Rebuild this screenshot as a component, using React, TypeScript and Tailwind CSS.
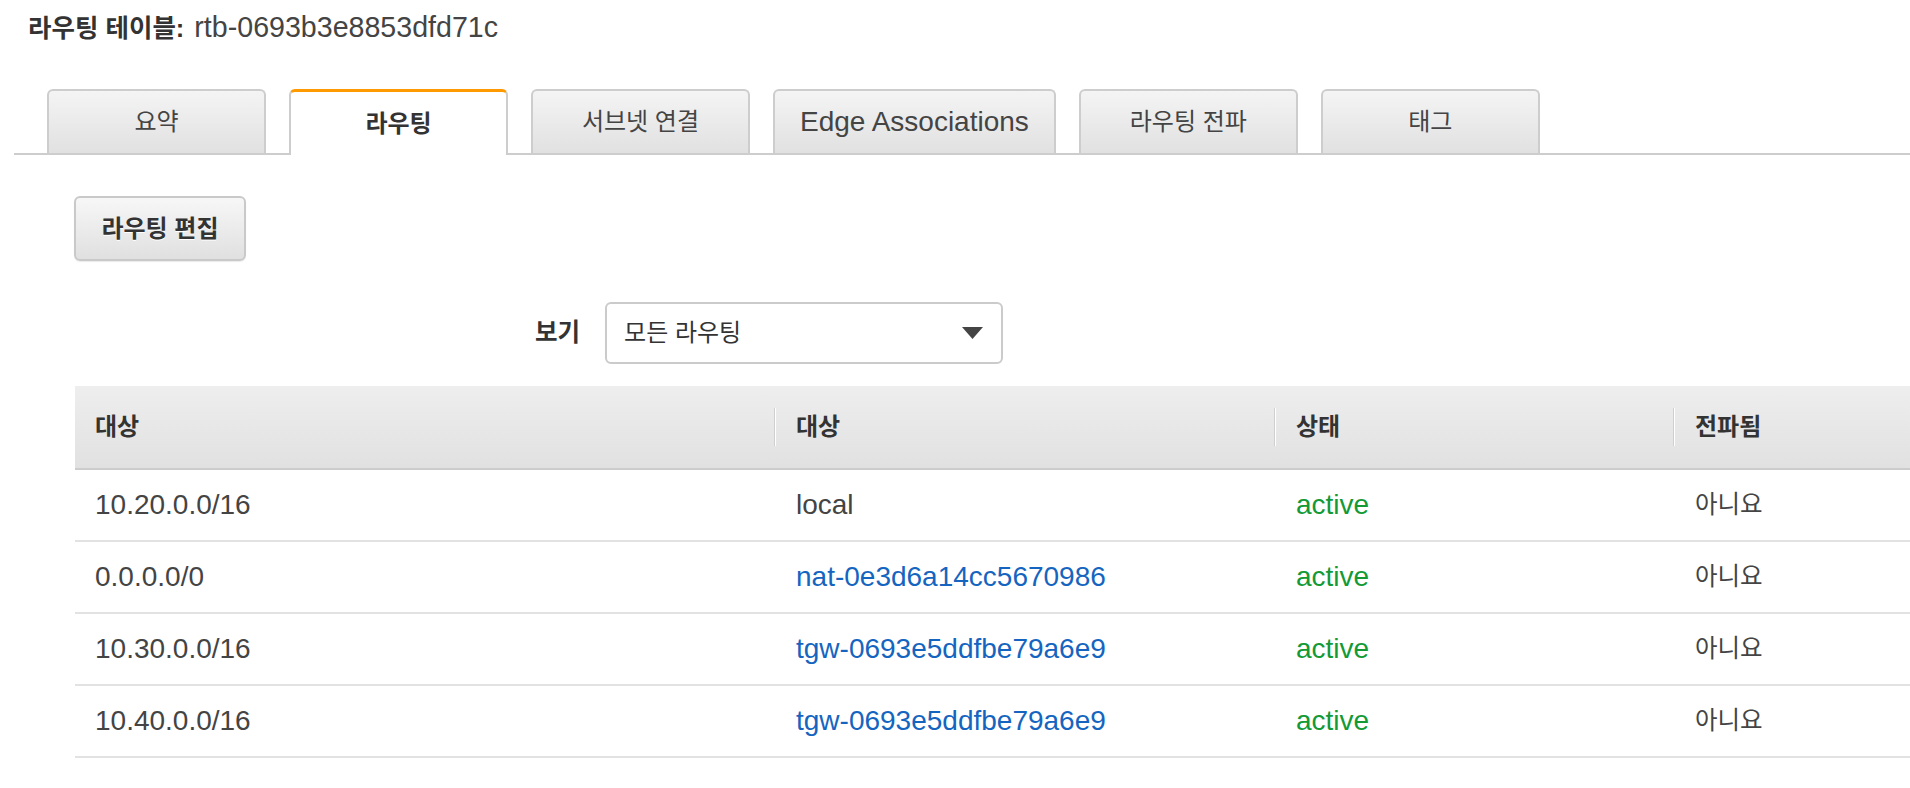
import React from "react";

const tabs = [
  { label: "요약", ko: true },
  { label: "라우팅", ko: true, active: true },
  { label: "서브넷 연결", ko: true },
  { label: "Edge Associations", ko: false },
  { label: "라우팅 전파", ko: true },
  { label: "태그", ko: true },
];

const rows = [
  { dest: "10.20.0.0/16", target: "local", link: false },
  { dest: "0.0.0.0/0", target: "nat-0e3d6a14cc5670986", link: true },
  { dest: "10.30.0.0/16", target: "tgw-0693e5ddfbe79a6e9", link: true },
  { dest: "10.40.0.0/16", target: "tgw-0693e5ddfbe79a6e9", link: true },
];

const font = "font-['Liberation_Sans','Noto_Sans_CJK_KR',sans-serif]";

function HeaderCell({ children, first, className }: { children: React.ReactNode; first?: boolean; className: string }) {
  return (
    <div className={`flex items-center h-full ${className}`}>
      {!first && <div className="h-[38px] w-[2px] border-l border-[#cfcfcf] bg-white" />}
      <span className="pl-[20px] text-[24px] font-bold text-[#333]">{children}</span>
    </div>
  );
}

export default function App() {
  return (
    <div className={`min-h-screen bg-white text-[#444] ${font} overflow-hidden`}>
      {/* title */}
      <div className="pt-[11px] pl-[28px] leading-[32px] flex items-baseline">
        <span className="text-[25.5px] font-bold text-[#333]">라우팅 테이블:</span>
        <span className="text-[28.6px] ml-[10px] text-[#444]">rtb-0693b3e8853dfd71c</span>
      </div>

      {/* tabs */}
      <div className="mt-[45px] ml-[14px] border-b-2 border-[#cdcdcd] flex items-end gap-[23px] pl-[33px]">
        {tabs.map((t) =>
          t.active ? (
            <div
              key={t.label}
              className="-mb-[2px] h-[66px] min-w-[219px] px-[26px] flex items-center justify-center bg-white border-x-2 border-t-[3px] border-x-[#cdcdcd] border-t-[#ff9900] rounded-t-[6px] text-[24px] font-bold text-[#333]"
            >
              {t.label}
            </div>
          ) : (
            <div
              key={t.label}
              className={`h-[64px] min-w-[219px] flex items-center justify-center bg-gradient-to-b from-[#f4f4f4] to-[#e1e1e1] border-x-2 border-t-2 border-[#cdcdcd] rounded-t-[6px] text-[#444] ${
                t.ko ? "px-[26px] text-[24px]" : "px-[25px] text-[28px]"
              }`}
            >
              {t.label}
            </div>
          )
        )}
      </div>

      {/* body */}
      <div className="pl-[74px]">
        <button className="mt-[41px] h-[65px] w-[172px] rounded-[6px] border-2 border-[#c9c9c9] bg-gradient-to-b from-[#f7f7f7] to-[#e0e0e0] text-[24px] font-bold text-[#333] [text-shadow:0_1px_0_#fff] shadow-[0_1px_1px_rgba(0,0,0,0.08)]">
          라우팅 편집
        </button>

        <div className="mt-[41px] pl-[461px] flex items-center gap-[25px]">
          <span className="text-[24.5px] font-bold text-[#333]">보기</span>
          <div className="h-[62px] w-[398px] rounded-[6px] border-2 border-[#cbcbcb] bg-white flex items-center justify-between pl-[17px] pr-[18px]">
            <span className="text-[24px] text-[#333]">모든 라우팅</span>
            <svg width="21" height="12" viewBox="0 0 21 12">
              <polygon points="0,0 21,0 10.5,12" fill="#444" />
            </svg>
          </div>
        </div>

        {/* table */}
        <div className="mt-[22px] ml-[1px]">
          <div className="h-[84px] flex border-b-2 border-[#cccccc] bg-gradient-to-b from-[#eeeeee] to-[#e1e1e1]">
            <HeaderCell first className="w-[699px]">대상</HeaderCell>
            <HeaderCell className="w-[500px]">대상</HeaderCell>
            <HeaderCell className="w-[399px]">상태</HeaderCell>
            <HeaderCell className="flex-1">전파됨</HeaderCell>
          </div>
          {rows.map((r, i) => (
            <div key={i} className="h-[72px] flex items-center border-b-2 border-[#e2e2e2]">
              <div className="w-[699px] pl-[20px] text-[28px]">{r.dest}</div>
              <div className={`w-[500px] pl-[22px] text-[28px] ${r.link ? "text-[#1565c0]" : "text-[#444]"}`}>{r.target}</div>
              <div className="w-[399px] pl-[22px] text-[28px] text-[#139a36]">active</div>
              <div className="flex-1 pl-[22px] text-[24.5px]">아니요</div>
            </div>
          ))}
        </div>
      </div>
    </div>
  );
}
